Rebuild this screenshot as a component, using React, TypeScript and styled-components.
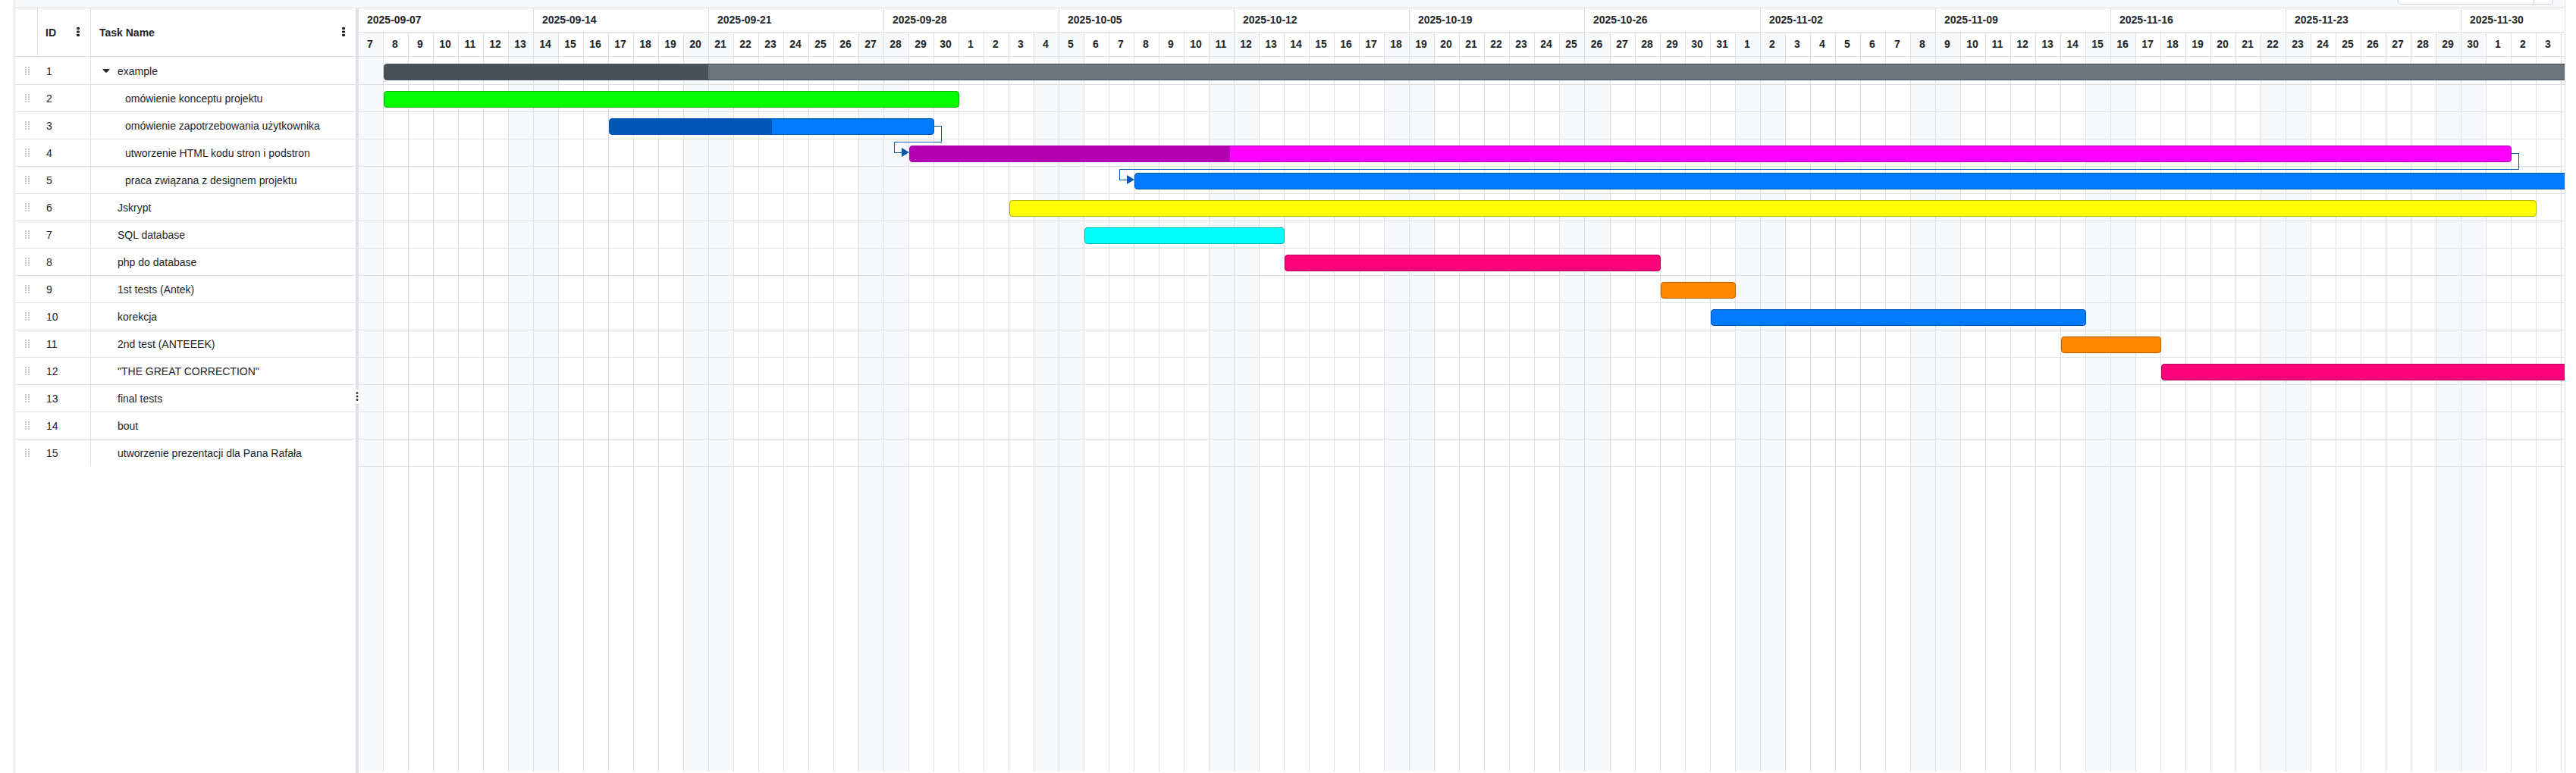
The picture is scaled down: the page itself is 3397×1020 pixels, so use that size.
import React from 'react';
import styled, { createGlobalStyle } from 'styled-components';

const LINE = '#dee0e3';
const LINK = '#0056b3';
const DAY = 33;
const ROW = 36;
const BAR = 22;

const GlobalStyle = createGlobalStyle`
  *, *::before, *::after { box-sizing: border-box; }
  html, body, #root { height: 100%; }
  body {
    margin: 0;
    background: #fff;
    color: #212529;
    font: 14px/20px "Liberation Sans", Arial, sans-serif;
    overflow: hidden;
  }
`;

const Frame = styled.main`
  display: flex;
  flex-direction: column;
  height: 100vh;
  margin: 0 14px 0 18px;
  border: 1px solid ${LINE};
  border-width: 0 1px;
  overflow: hidden;
`;

const Toolbar = styled.header`
  display: flex;
  flex: none;
  justify-content: flex-end;
  align-items: flex-end;
  height: 11px;
  padding: 0 15px 4px;
  background: #f8f9fa;
  border-bottom: 1px solid ${LINE};
  overflow: hidden;
`;

const Search = styled.form`
  display: flex;
  flex: none;
  width: 205px;
  height: 32px;
  border: 1px solid #ced4da;
  border-radius: 4px;
  background: #fff;
`;

const SearchInput = styled.input`
  flex: 1;
  min-width: 0;
  border: 0;
  padding: 0 8px;
  background: none;
  font: inherit;
`;

const SearchButton = styled.button`
  width: 25px;
  padding: 0;
  border: 0;
  border-left: 1px solid #ced4da;
  background: none;
`;

const Split = styled.div`
  display: flex;
  flex: 1;
  min-height: 0;
`;

const TreePane = styled.section`
  flex: none;
  width: 450px;
`;

const TreeTable = styled.table`
  width: 100%;
  table-layout: fixed;
  border-collapse: separate;
  border-spacing: 0;
`;

const HeadCell = styled.th<{ $last?: boolean }>`
  height: 64px;
  padding: 0 14px 0 ${p => (p.$last ? 11 : 10)}px;
  border-right: ${p => (p.$last ? 0 : 1)}px solid ${LINE};
  border-bottom: 1px solid ${LINE};
  text-align: left;
`;

const HeadContent = styled.div`
  display: flex;
  align-items: center;
  justify-content: space-between;
`;

const MenuButton = styled.button`
  display: flex;
  padding: 0 0 2px;
  border: 0;
  background: none;
  color: inherit;
`;

const Cell = styled.td<{ $line?: boolean }>`
  height: ${ROW}px;
  padding: 1px 0 0 11px;
  border-right: ${p => (p.$line ? 1 : 0)}px solid ${LINE};
  border-bottom: 1px solid ${LINE};
  white-space: nowrap;
  tr:first-child > & { height: ${ROW + 1}px; }
  tr:last-child > & { height: ${ROW - 1}px; border-bottom: 0; }
`;

const DragCell = styled(Cell)`
  padding-left: 14px;
`;

const NameContent = styled.div<{ $level: number }>`
  display: flex;
  align-items: center;
  padding-left: ${p => p.$level * 10 + 4}px;
`;

const Toggle = styled.button`
  display: flex;
  align-items: center;
  width: 20px;
  height: 20px;
  padding: 0;
  border: 0;
  background: none;
  color: inherit;
`;

const ToggleSpace = styled.span`
  width: 20px;
`;

const Splitter = styled.div`
  display: flex;
  flex: none;
  align-items: center;
  width: 4px;
  background: #dee2e6;
`;

const Grip = styled.div`
  display: flex;
  align-items: center;
  justify-content: center;
  width: 4px;
  height: 18px;
  margin-top: 14px;
  background: #fff;
`;

const ChartPane = styled.section`
  display: flex;
  flex: 1;
  flex-direction: column;
  min-width: 0;
  padding-bottom: 2px;
  overflow: hidden;
`;

const Timeline = styled.div`
  display: flex;
  flex: none;
`;

const Tier = styled.div`
  display: flex;
`;

const Week = styled.div`
  height: 32px;
  padding: 5px 11px 6px;
  border-right: 1px solid ${LINE};
  border-bottom: 1px solid ${LINE};
  font-weight: 700;
`;

const WeekBlock = styled.div`
  flex: none;
`;

const DayCell = styled.div<{ $off: boolean; $width: number }>`
  flex: none;
  width: ${p => p.$width}px;
  height: 32px;
  padding: 5px 2px 6px 0;
  border-right: 1px solid ${LINE};
  border-bottom: 1px solid ${LINE};
  background: ${p => (p.$off ? '#f8f9fa' : '#fff')};
  font-weight: 700;
  text-align: center;
`;

const Canvas = styled.div`
  position: relative;
  flex: 1;
  min-height: 0;
`;

const Stripes = styled.div`
  display: flex;
  height: 100%;
`;

const Stripe = styled.div<{ $off: boolean; $width: number }>`
  flex: none;
  width: ${p => p.$width}px;
  border-right: 1px solid ${LINE};
  background: ${p => (p.$off ? '#f8f9fa' : '#fff')};
`;

const Rows = styled.div`
  position: absolute;
  inset: 0;
  overflow: hidden;
`;

const ChartRow = styled.div`
  height: ${ROW}px;
  padding-top: 8px;
  border-bottom: 1px solid ${LINE};
  &:first-child { height: ${ROW + 1}px; padding-top: 9px; }
`;

const TaskBar = styled.div<{ $fill: string; $dark: string }>`
  height: ${BAR}px;
  border: 1px solid ${p => p.$dark};
  border-radius: 4px;
  background: ${p => p.$fill};
  overflow: hidden;
`;

const Progress = styled.div<{ $dark: string }>`
  height: 100%;
  background: ${p => p.$dark};
`;

const Links = styled.svg`
  position: absolute;
  inset: 0;
  width: 100%;
  height: 100%;
`;

interface Task {
  name: string;
  level: number;
  start?: string;
  end?: string;
  fill?: string;
  dark?: string;
  done?: number;
}

const BLUE = { fill: '#007bff', dark: '#0056b3' };
const PINK = { fill: '#ff007b', dark: '#b30056' };
const ORANGE = { fill: '#ff8800', dark: '#b35f00' };

const tasks: Task[] = [
  { name: 'example', level: 0, start: '2025-09-08', end: '2025-12-20', fill: '#6c757d', dark: '#495057', done: 427 },
  { name: 'omówienie konceptu projektu', level: 1, start: '2025-09-08', end: '2025-10-01', fill: '#00ff00', dark: '#00b300' },
  { name: 'omówienie zapotrzebowania użytkownika', level: 1, start: '2025-09-17', end: '2025-09-30', ...BLUE, done: 214 },
  { name: 'utworzenie HTML kodu stron i podstron', level: 1, start: '2025-09-29', end: '2025-12-02', fill: '#ff00ff', dark: '#b300b3', done: 422 },
  { name: 'praca związana z designem projektu', level: 1, start: '2025-10-08', end: '2025-12-20', ...BLUE },
  { name: 'Jskrypt', level: 0, start: '2025-10-03', end: '2025-12-03', fill: '#ffff00', dark: '#b3b300' },
  { name: 'SQL database', level: 0, start: '2025-10-06', end: '2025-10-14', fill: '#00ffff', dark: '#00b3b3' },
  { name: 'php do database', level: 0, start: '2025-10-14', end: '2025-10-29', ...PINK },
  { name: '1st tests (Antek)', level: 0, start: '2025-10-29', end: '2025-11-01', ...ORANGE },
  { name: 'korekcja', level: 0, start: '2025-10-31', end: '2025-11-15', ...BLUE },
  { name: '2nd test (ANTEEEK)', level: 0, start: '2025-11-14', end: '2025-11-18', ...ORANGE },
  { name: '"THE GREAT CORRECTION"', level: 0, start: '2025-11-18', end: '2025-12-20', ...PINK },
  { name: 'final tests', level: 0 },
  { name: 'bout', level: 0 },
  { name: 'utworzenie prezentacji dla Pana Rafała', level: 0 },
];

const FIRST = Date.UTC(2025, 8, 7);
const MS = 86400000;
const WEEKS = 13;
// The clocks go back on 26 October, so that day is an hour longer.
const LONG_DAY = 49;

const days = Array.from({ length: WEEKS * 7 }, (_, i) => {
  const date = new Date(FIRST + i * MS);
  return {
    iso: date.toISOString().slice(0, 10),
    label: date.getUTCDate(),
    off: i % 7 === 0 || i % 7 === 6,
    width: i === LONG_DAY ? DAY + 1 : DAY,
  };
});
const weeks = Array.from({ length: WEEKS }, (_, i) => days.slice(i * 7, i * 7 + 7));

const toX = (iso: string) => {
  const n = Math.round((Date.parse(iso) - FIRST) / MS);
  return n * DAY + (n > LONG_DAY ? 1 : 0);
};

const rowTop = (i: number) => (i === 0 ? 0 : i * ROW + 1);

function Connector({ from, to }: { from: number; to: number }) {
  const x1 = toX(tasks[from].end!);
  const x2 = toX(tasks[to].start!);
  const y1 = rowTop(from) + 18;
  const yMid = rowTop(to) + 3;
  const y2 = rowTop(to) + 17;
  return (
    <g>
      <path
        d={`M${x1} ${y1 + 0.5}H${x1 + 9.5}V${yMid + 0.5}H${x2 - 19.5}V${y2 + 0.5}H${x2 - 9}`}
        fill="none"
        stroke={LINK}
      />
      <path d={`M${x2 - 10} ${y2 - 6}l10 6l-10 6z`} fill={LINK} />
    </g>
  );
}

function MenuDots() {
  return (
    <svg width="4" height="12" viewBox="0 0 4 12" fill="currentColor" aria-hidden="true">
      <rect y="0" width="4" height="3" rx="1" />
      <rect y="4.5" width="4" height="3" rx="1" />
      <rect y="9" width="4" height="3" rx="1" />
    </svg>
  );
}

function DragDots() {
  return (
    <svg width="7" height="12" viewBox="0 0 7 12" fill="#c4c6c9" aria-hidden="true" display="block">
      {[0, 3, 6, 9].map(y => (
        <g key={y}>
          <rect x="0" y={y} width="2" height="2" />
          <rect x="4" y={y} width="2" height="2" />
        </g>
      ))}
    </svg>
  );
}

export default function App() {
  return (
    <>
      <GlobalStyle />
      <Frame>
        <Toolbar>
          <Search>
            <SearchInput type="search" aria-label="Search" />
            <SearchButton type="button" aria-label="Run search" />
          </Search>
        </Toolbar>
        <Split>
          <TreePane>
            <TreeTable>
              <colgroup>
                <col width="31" />
                <col width="70" />
                <col />
              </colgroup>
              <thead>
                <tr>
                  <HeadCell aria-label="Reorder" />
                  <HeadCell>
                    <HeadContent>
                      ID
                      <MenuButton type="button" aria-label="ID column menu"><MenuDots /></MenuButton>
                    </HeadContent>
                  </HeadCell>
                  <HeadCell $last>
                    <HeadContent>
                      Task Name
                      <MenuButton type="button" aria-label="Task Name column menu"><MenuDots /></MenuButton>
                    </HeadContent>
                  </HeadCell>
                </tr>
              </thead>
              <tbody>
                {tasks.map((task, i) => (
                  <tr key={task.name}>
                    <DragCell><DragDots /></DragCell>
                    <Cell $line>{i + 1}</Cell>
                    <Cell>
                      <NameContent $level={task.level}>
                        {i === 0 ? (
                          <Toggle type="button" aria-label="Collapse example">
                            <svg width="10" height="5" viewBox="0 0 10 5" fill="currentColor">
                              <path d="M0 0H10L6 4.4Q5 5.2 4 4.4Z" />
                            </svg>
                          </Toggle>
                        ) : (
                          <ToggleSpace />
                        )}
                        {task.name}
                      </NameContent>
                    </Cell>
                  </tr>
                ))}
              </tbody>
            </TreeTable>
          </TreePane>
          <Splitter role="separator" aria-orientation="vertical">
            <Grip>
              <svg width="4" height="12" viewBox="0 0 4 12" fill="#343a40" aria-hidden="true">
                <circle cx="2" cy="1.5" r="1.5" />
                <circle cx="2" cy="6" r="1.5" />
                <circle cx="2" cy="10.5" r="1.5" />
              </svg>
            </Grip>
          </Splitter>
          <ChartPane>
            <Timeline>
              {weeks.map(week => (
                <WeekBlock key={week[0].iso}>
                  <Week>{week[0].iso}</Week>
                  <Tier>
                    {week.map(day => (
                      <DayCell key={day.iso} $off={day.off} $width={day.width}>{day.label}</DayCell>
                    ))}
                  </Tier>
                </WeekBlock>
              ))}
            </Timeline>
            <Canvas>
              <Stripes>
                {days.map(day => <Stripe key={day.iso} $off={day.off} $width={day.width} />)}
              </Stripes>
              <Rows>
                {tasks.map(task => (
                  <ChartRow key={task.name}>
                    {task.start && task.end && (
                      <TaskBar
                        $fill={task.fill!}
                        $dark={task.dark!}
                        style={{ marginLeft: toX(task.start), width: toX(task.end) - toX(task.start) }}
                      >
                        {task.done && <Progress $dark={task.dark!} style={{ width: task.done }} />}
                      </TaskBar>
                    )}
                  </ChartRow>
                ))}
              </Rows>
              <Links aria-hidden="true">
                <Connector from={2} to={3} />
                <Connector from={3} to={4} />
              </Links>
            </Canvas>
          </ChartPane>
        </Split>
      </Frame>
    </>
  );
}
